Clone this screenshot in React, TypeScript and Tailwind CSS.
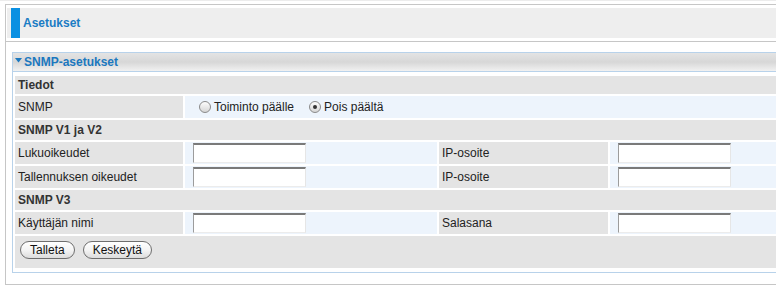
import React from "react";

function TextInput() {
  return (
    <div className="mt-[1px] ml-[8px] h-[20px] w-[113px] bg-white border-t-2 border-t-[#7a7a7a] border-l border-l-[#9c9c9c] border-r border-r-[#e6e6e6] border-b border-b-[#ececec]" />
  );
}

function Radio({ checked }: { checked?: boolean }) {
  return (
    <span className="flex h-[12px] w-[12px] items-center justify-center rounded-full border border-[#8a8a8a] bg-gradient-to-b from-[#fdfdfd] to-[#d6d6d6]">
      {checked && <span className="h-[4px] w-[4px] rounded-full bg-[#333]" />}
    </span>
  );
}

function Label({ children }: { children: React.ReactNode }) {
  return (
    <div className="flex items-center bg-[#e4e4e4] pl-[3px] text-[12px] text-[#222]">{children}</div>
  );
}

function Value({ children }: { children?: React.ReactNode }) {
  return <div className="flex items-start bg-[#edf4fc]">{children}</div>;
}

function Button({ children }: { children: React.ReactNode }) {
  return (
    <button className="h-[18px] rounded-full border border-[#6e6e6e] bg-gradient-to-b from-[#ffffff] via-[#f4f4f4] to-[#dcdcdc] px-[9px] text-[12px] leading-[16px] text-[#111]">
      {children}
    </button>
  );
}

export default function App() {
  return (
    <div className="h-[296px] w-[776px] overflow-hidden bg-white font-['Liberation_Sans',Arial,sans-serif]">
      <div className="h-px bg-[#ececec]" />
      <div className="ml-[5px] mt-[3px] w-[900px] border border-[#c6c6c6]">
        <div className="border-b border-[#c6c6c6] pb-[3px] pl-[1px] pt-[3px]">
          <div className="flex h-[30px] items-stretch bg-[#eeeeee]">
            <div className="ml-[4px] w-[9px] bg-[#0a90e2]" />
            <div className="ml-[3px] flex items-center text-[12px] font-bold text-[#1b7cc4]">Asetukset</div>
          </div>
        </div>
        <div className="pb-[11px] pl-[6px] pt-[10px]">
          <div className="w-[860px] border border-[#b8d2ea]">
            <div className="flex h-[19px] items-center border-b border-[#b8d2ea] bg-gradient-to-b from-[#e4e4e4] via-[#d7d7d7] to-[#f1f1f1] pl-[2px] text-[12px] font-bold text-[#1b78bf]">
              <svg width="7" height="5" viewBox="0 0 7 5" className="mb-[4px] mr-[2px]">
                <polygon points="0,0 7,0 3.5,4.5" fill="#1b78bf" />
              </svg>
              <span>SNMP-asetukset</span>
            </div>
            <div className="pb-[4px] pl-[2px] pt-[4px]">
              <div className="grid grid-cols-[168px_252px_169px_252px] gap-[2px]">
                <div className="col-span-4 flex h-[18px] items-center bg-[#e4e4e4] pl-[3px] text-[12px] font-bold text-[#333]">Tiedot</div>

                <div className="flex h-[22px] items-center bg-[#e4e4e4] pl-[3px] text-[12px] text-[#222]">SNMP</div>
                <div className="col-span-3 flex items-center bg-[#edf4fc] pl-[14px] text-[12px] text-[#222]">
                  <Radio />
                  <span className="ml-[3px]">Toiminto päälle</span>
                  <span className="ml-[15px]"><Radio checked /></span>
                  <span className="ml-[3px]">Pois päältä</span>
                </div>

                <div className="col-span-4 flex h-[20px] items-center bg-[#e4e4e4] pl-[3px] text-[12px] font-bold text-[#333]">SNMP V1 ja V2</div>

                <div className="flex h-[22px] items-center bg-[#e4e4e4] pl-[3px] text-[12px] text-[#222]">Lukuoikeudet</div>
                <Value><TextInput /></Value>
                <Label>IP-osoite</Label>
                <Value><TextInput /></Value>

                <div className="flex h-[22px] items-center bg-[#e4e4e4] pl-[3px] text-[12px] text-[#222]">Tallennuksen oikeudet</div>
                <Value><TextInput /></Value>
                <Label>IP-osoite</Label>
                <Value><TextInput /></Value>

                <div className="col-span-4 flex h-[20px] items-center bg-[#e4e4e4] pl-[3px] text-[12px] font-bold text-[#333]">SNMP V3</div>

                <div className="flex h-[22px] items-center bg-[#e4e4e4] pl-[3px] text-[12px] text-[#222]">Käyttäjän nimi</div>
                <Value><TextInput /></Value>
                <Label>Salasana</Label>
                <Value><TextInput /></Value>

                <div className="col-span-4 flex h-[32px] items-start gap-[8px] bg-[#e4e4e4] pl-[5px] pt-[5px]">
                  <Button>Talleta</Button>
                  <Button>Keskeytä</Button>
                </div>
              </div>
            </div>
          </div>
        </div>
      </div>
    </div>
  );
}
